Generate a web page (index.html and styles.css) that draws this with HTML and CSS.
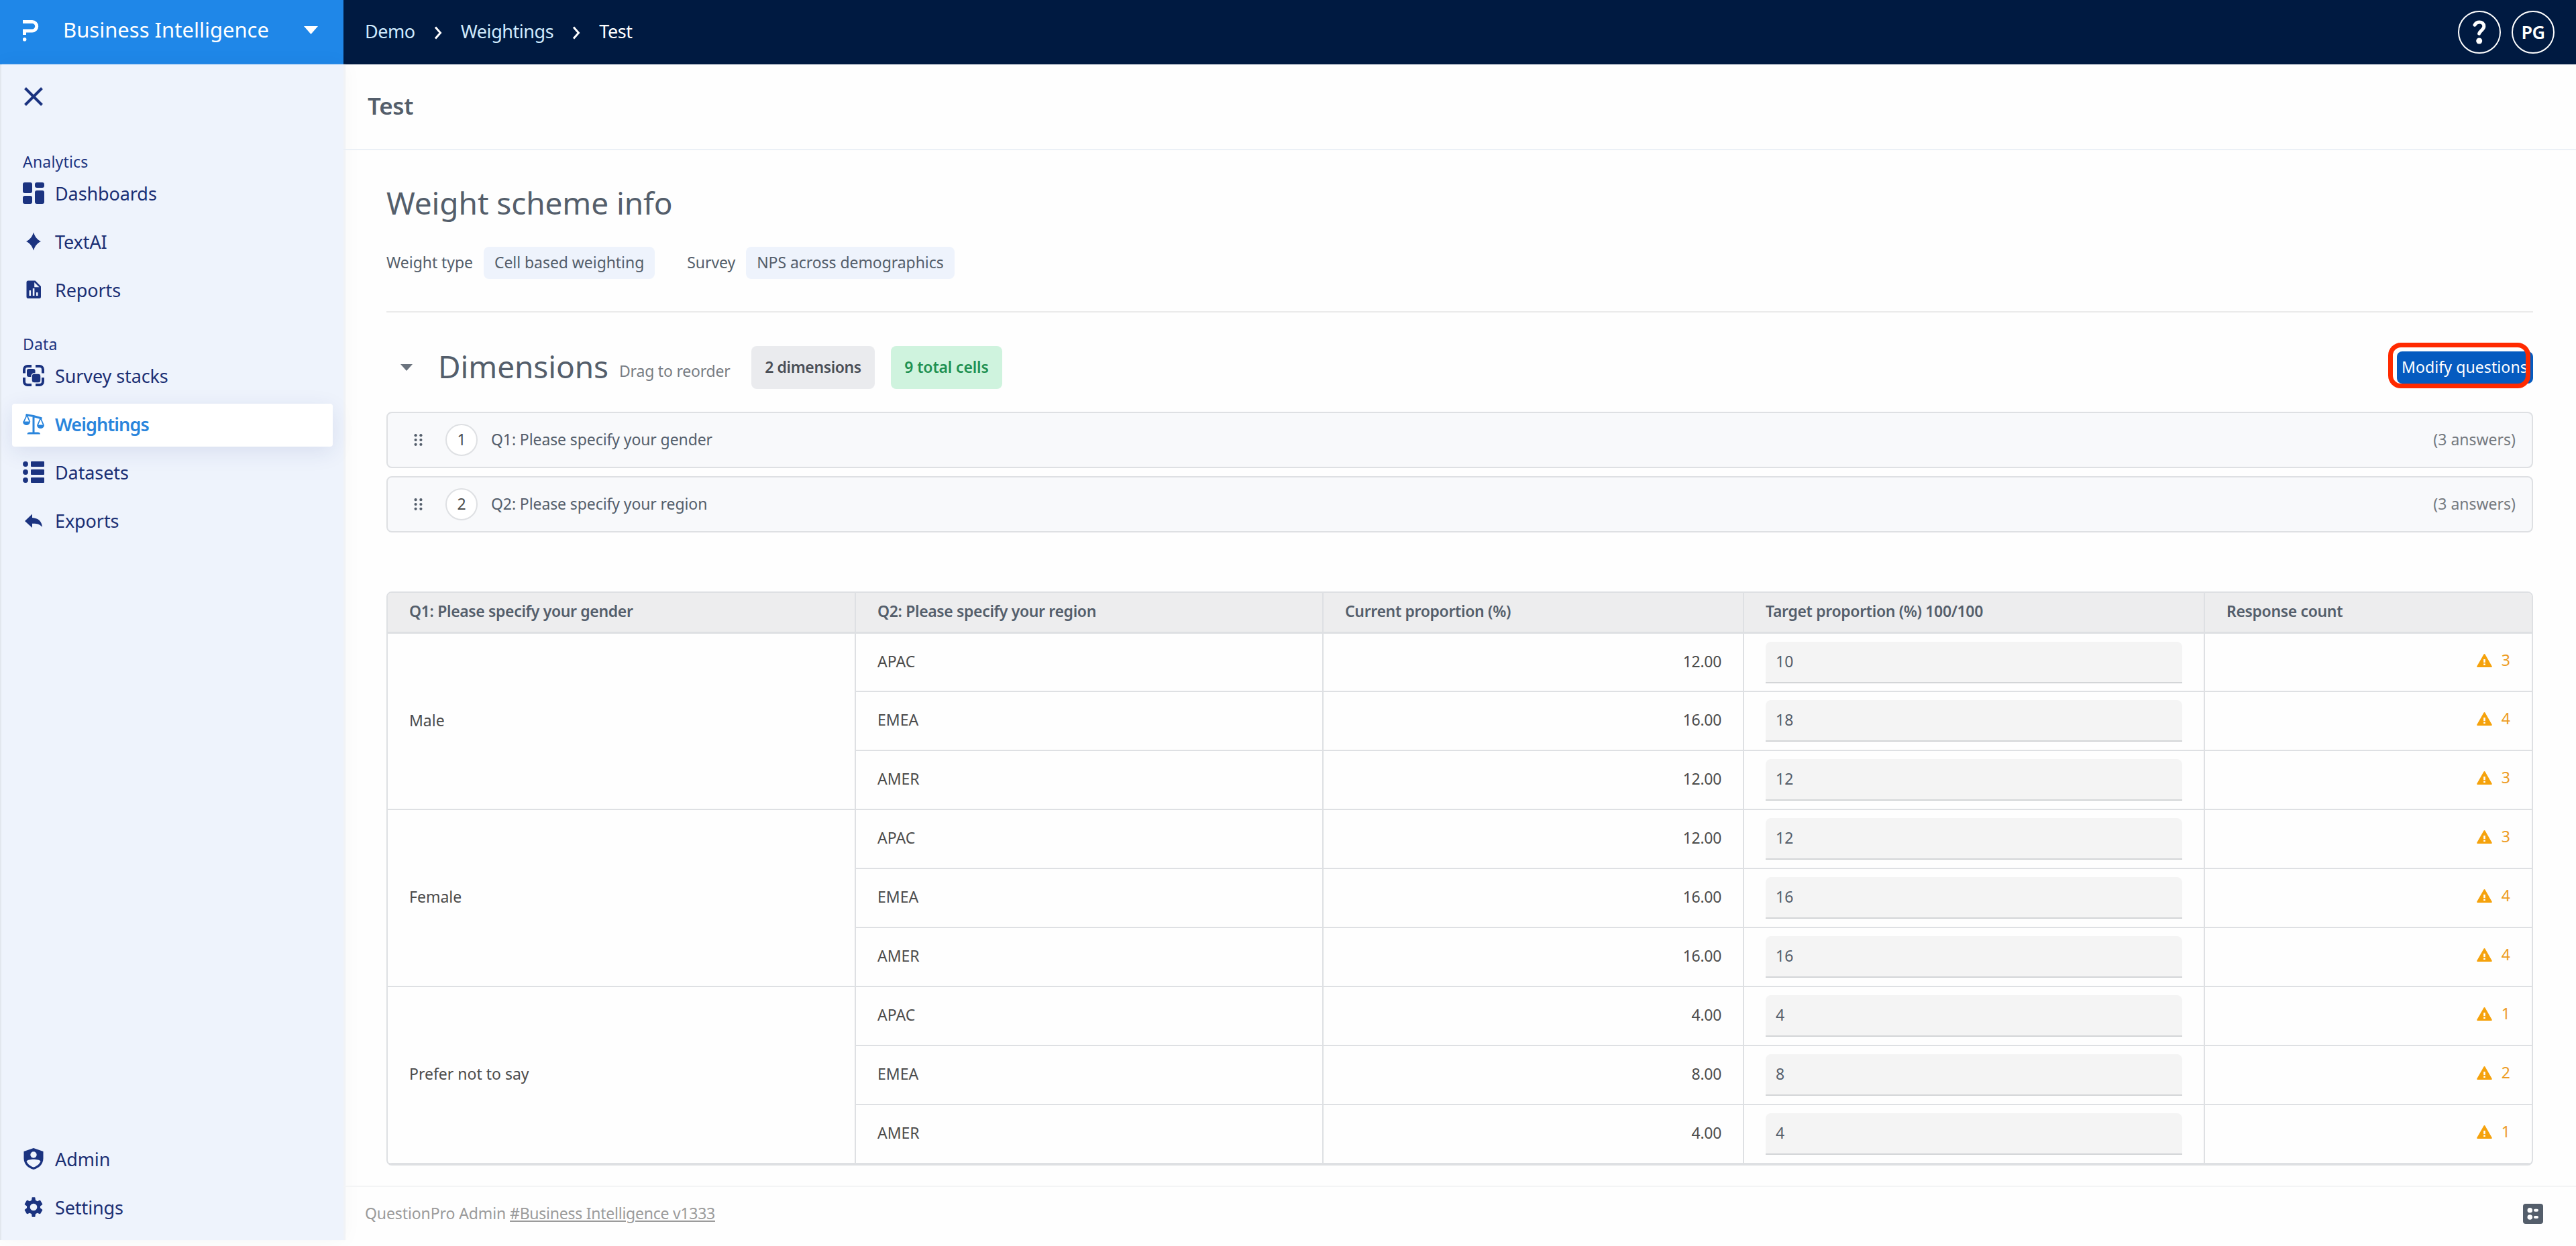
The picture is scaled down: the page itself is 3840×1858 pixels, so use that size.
FILE: index.html
```html
<!DOCTYPE html>
<html lang="en">
<head>
    <meta charset="UTF-8">
    <meta name="viewport" content="width=device-width, initial-scale=1.0">
    <title>Test - Weightings</title>
    <link rel="stylesheet" href="styles.css">
</head>
<body>

    <!-- Shared icons -->
    <svg class="sprite" width="0" height="0">
        <symbol id="warning" viewBox="0 0 23 20">
            <path d="M10.6 .6a1 1 0 0 1 1.8 0l10.3 17.9a1 1 0 0 1-.9 1.5H1.2a1 1 0 0 1-.9-1.5z" fill="#f5a20c"/>
            <path d="M10.2 8h2.6v5h-2.6zM10.2 14.6h2.6v2.4h-2.6z" fill="#fff"/>
        </symbol>
        <symbol id="drag" viewBox="0 0 13 18">
            <g fill="#545e6b">
                <circle cx="2.6" cy="2.2" r="2.1"/><circle cx="10.4" cy="2.2" r="2.1"/>
                <circle cx="2.6" cy="9" r="2.1"/><circle cx="10.4" cy="9" r="2.1"/>
                <circle cx="2.6" cy="15.8" r="2.1"/><circle cx="10.4" cy="15.8" r="2.1"/>
            </g>
        </symbol>
        <symbol id="chevron" viewBox="0 0 12 20">
            <path d="M2 1.5L9.5 10L2 18.5" fill="none" stroke="#fff" stroke-width="3"/>
        </symbol>
    </svg>

    <header class="topbar">
        <div class="product">
            <svg class="logo" width="24" height="32" viewBox="0 0 24 32">
                <path d="M0 2.5H14a6.7 6.7 0 0 1 0 13.4H2.5V22" fill="none" stroke="#fff" stroke-width="5"/>
                <circle cx="2.6" cy="28.8" r="2.8" fill="#fff"/>
            </svg>
            <span class="product-name">Business Intelligence</span>
            <svg class="caret" width="21" height="12" viewBox="0 0 21 12"><path d="M0 0H21L10.5 12z" fill="#fff"/></svg>
        </div>
        <nav class="breadcrumb">
            <a>Demo</a>
            <svg width="12" height="20"><use href="#chevron"/></svg>
            <a>Weightings</a>
            <svg width="12" height="20"><use href="#chevron"/></svg>
            <span>Test</span>
        </nav>
        <div class="user">
            <div class="round">
                <svg width="20" height="36" viewBox="0 0 20 36">
                    <path d="M3 7.2C4.500 4.500 7 3 10 3c4 0 6.800 2.400 6.800 6.200 0 5-5.800 6-7.200 11" fill="none" stroke="#fff" stroke-width="5" stroke-linecap="round"/>
                    <circle cx="9.700" cy="31" r="4.500" fill="#fff"/>
                </svg>
            </div>
            <div class="round initials">PG</div>
        </div>
    </header>

    <div class="page">
        <aside class="sidebar">
            <div class="close">
                <svg width="28" height="28" viewBox="0 0 28 28"><path d="M1.500 1.500L26.500 26.500M26.500 1.500L1.500 26.500" stroke="#1b3380" stroke-width="4"/></svg>
            </div>

            <div class="group">
                <div class="label">Analytics</div>
                <a class="item">
                    <svg width="32" height="32" viewBox="0 0 32 32" fill="#1b3380">
                        <rect x="0" y="0" width="14" height="16" rx="3"/><rect x="18" y="0" width="14" height="8" rx="3"/>
                        <rect x="0" y="20" width="14" height="12" rx="3"/><rect x="18" y="12" width="14" height="20" rx="3"/>
                    </svg>
                    Dashboards
                </a>
                <a class="item">
                    <svg width="32" height="32" viewBox="0 0 32 32" fill="#1b3380"><path d="M16 2.500C18 9 21.500 13.500 27 16C21.500 18.500 18 23 16 29.500C14 23 10.500 18.500 5 16C10.500 13.500 14 9 16 2.500z"/></svg>
                    TextAI
                </a>
                <a class="item">
                    <svg width="32" height="32" viewBox="0 0 32 32" fill="#1b3380">
                        <path d="M8 2.500H18.500L27 11V26.500a2.500 2.500 0 0 1-2.500 2.500H8a2.500 2.500 0 0 1-2.500-2.500V5a2.500 2.500 0 0 1 2.500-2.500z"/>
                        <path d="M17.200 5V12.200H24.600zM9.500 17h2.600v8h-2.600zM14.800 14h2.600v11h-2.600zM20 20h2.600v5h-2.600z" fill="#eef3fc"/>
                    </svg>
                    Reports
                </a>
            </div>

            <div class="group">
                <div class="label">Data</div>
                <a class="item">
                    <svg width="32" height="32" viewBox="0 0 32 32">
                        <path d="M2 12.500V7a5 5 0 0 1 5-5H13M19 2h6a5 5 0 0 1 5 5v5.500M30 19v6a5 5 0 0 1-5 5H19M13 30H7a5 5 0 0 1-5-5V19" fill="none" stroke="#1b3380" stroke-width="4"/>
                        <rect x="6" y="6" width="12.500" height="12" rx="3" fill="#1b3380"/>
                        <rect x="13" y="13" width="14" height="14" rx="4" fill="#1b3380" stroke="#eef3fc" stroke-width="1.500"/>
                    </svg>
                    Survey stacks
                </a>
                <a class="item active">
                    <svg width="32" height="32" viewBox="0 0 32 32">
                        <path d="M4.500 2.500L16 4.500L28.500 8M16 4V29" fill="none" stroke="#2a85dc" stroke-width="3"/>
                        <path d="M6 3L1.500 13M6 3L10.500 13M26.500 7.500L22 18M26.500 7.500L31 18" fill="none" stroke="#2a85dc" stroke-width="1.800"/>
                        <path d="M0 12.500H11a5.500 5.500 0 0 1-11 0zM21 17.500H32a5.500 5.500 0 0 1-11 0zM6.500 31.500c0-2 1.500-3 3.500-3H22.500c2 0 3.500 1 3.500 3z" fill="#2a85dc"/>
                    </svg>
                    Weightings
                </a>
                <a class="item">
                    <svg width="32" height="32" viewBox="0 0 32 32" fill="#1b3380">
                        <circle cx="4" cy="4" r="3.900"/><circle cx="4" cy="16" r="3.900"/><circle cx="4" cy="28" r="3.900"/>
                        <rect x="12" y="0" width="20" height="8" rx="1"/><rect x="12" y="12" width="20" height="8" rx="1"/><rect x="12" y="24" width="20" height="8" rx="1"/>
                    </svg>
                    Datasets
                </a>
                <a class="item">
                    <svg width="32" height="32" viewBox="0 0 32 32" fill="#1b3380"><path d="M3 17L14 6.500V12C23 12.500 28 17 29 26C25 21.500 20.500 20.500 14 20.800V27z"/></svg>
                    Exports
                </a>
            </div>

            <div class="group bottom">
                <a class="item">
                    <svg width="32" height="32" viewBox="0 0 32 32">
                        <path d="M16 0L30.500 5V15C30.500 24 24.500 29.500 16 32C7.500 29.500 1.500 24 1.500 15V5z" fill="#1b3380"/>
                        <circle cx="16" cy="10" r="4.700" fill="#eef3fc"/>
                        <path d="M5.500 19.500C8.500 15.800 23.500 15.800 26.500 19.500C24.500 24.500 20.500 27 16 28.500C11.500 27 7.500 24.500 5.500 19.500z" fill="#eef3fc"/>
                    </svg>
                    Admin
                </a>
                <a class="item">
                    <svg width="32" height="32" viewBox="0 0 24 24" fill="#1b3380"><path d="M19.400 13c.1-.3.100-.6.100-1s0-.7-.1-1l2.400-1.900a.6.6 0 0 0 .1-.7L19.700 4.600a.6.6 0 0 0-.7-.3l-2.800 1.200c-.6-.5-1.300-.8-2-1.100L13.800 1.400a.6.6 0 0 0-.6-.5H10.800a.6.6 0 0 0-.6.500L9.800 4.400c-.7.3-1.400.7-2 1.100L5 4.300a.6.6 0 0 0-.7.3L2.100 8.400a.6.6 0 0 0 .1.700L4.600 11c0 .3-.1.700-.1 1s0 .7.1 1L2.200 14.900a.6.6 0 0 0-.1.700l2.200 3.800c.1.300.4.400.7.300l2.800-1.200c.6.500 1.300.8 2 1.100l.4 3c0 .3.300.5.600.5h2.400c.3 0 .6-.2.600-.5l.4-3c.7-.3 1.400-.7 2-1.100l2.800 1.200c.3.100.6 0 .7-.3l2.200-3.800a.6.6 0 0 0-.1-.7zM12 16a4 4 0 1 1 0-8 4 4 0 0 1 0 8z"/></svg>
                    Settings
                </a>
            </div>
        </aside>

        <main class="main">
            <div class="title-bar">Test</div>

            <div class="content">
                <h1>Weight scheme info</h1>
                <div class="meta">
                    <span class="meta-label">Weight type</span>
                    <span class="chip">Cell based weighting</span>
                    <span class="meta-label second">Survey</span>
                    <span class="chip">NPS across demographics</span>
                </div>

                <div class="dimensions">
                    <svg class="toggle" width="18" height="10" viewBox="0 0 18 10"><path d="M0 0H18L9 10z" fill="#6b737e"/></svg>
                    <h2>Dimensions</h2>
                    <span class="hint">Drag to reorder</span>
                    <span class="badge grey">2 dimensions</span>
                    <span class="badge green">9 total cells</span>
                    <div class="modify">
                        <button>Modify questions</button>
                        <div class="highlight"></div>
                    </div>
                </div>

                <div class="question">
                    <svg width="13" height="18"><use href="#drag"/></svg>
                    <span class="number">1</span>
                    <span>Q1: Please specify your gender</span>
                    <span class="answers">(3 answers)</span>
                </div>
                <div class="question">
                    <svg width="13" height="18"><use href="#drag"/></svg>
                    <span class="number">2</span>
                    <span>Q2: Please specify your region</span>
                    <span class="answers">(3 answers)</span>
                </div>

                <div class="table-box">
                    <table>
                        <colgroup>
                            <col class="c1"><col class="c2"><col class="c3"><col class="c4"><col class="c5">
                        </colgroup>
                        <tr>
                            <th>Q1: Please specify your gender</th>
                            <th>Q2: Please specify your region</th>
                            <th>Current proportion (%)</th>
                            <th>Target proportion (%) 100/100</th>
                            <th>Response count</th>
                        </tr>
                        <tr class="first">
                            <td rowspan="3">Male</td>
                            <td>APAC</td>
                            <td class="num">12.00</td>
                            <td class="target"><input type="text" value="10"></td>
                            <td class="count"><svg width="23" height="20"><use href="#warning"/></svg>3</td>
                        </tr>
                        <tr>
                            <td>EMEA</td>
                            <td class="num">16.00</td>
                            <td class="target"><input type="text" value="18"></td>
                            <td class="count"><svg width="23" height="20"><use href="#warning"/></svg>4</td>
                        </tr>
                        <tr>
                            <td>AMER</td>
                            <td class="num">12.00</td>
                            <td class="target"><input type="text" value="12"></td>
                            <td class="count"><svg width="23" height="20"><use href="#warning"/></svg>3</td>
                        </tr>
                        <tr>
                            <td rowspan="3">Female</td>
                            <td>APAC</td>
                            <td class="num">12.00</td>
                            <td class="target"><input type="text" value="12"></td>
                            <td class="count"><svg width="23" height="20"><use href="#warning"/></svg>3</td>
                        </tr>
                        <tr>
                            <td>EMEA</td>
                            <td class="num">16.00</td>
                            <td class="target"><input type="text" value="16"></td>
                            <td class="count"><svg width="23" height="20"><use href="#warning"/></svg>4</td>
                        </tr>
                        <tr>
                            <td>AMER</td>
                            <td class="num">16.00</td>
                            <td class="target"><input type="text" value="16"></td>
                            <td class="count"><svg width="23" height="20"><use href="#warning"/></svg>4</td>
                        </tr>
                        <tr>
                            <td rowspan="3">Prefer not to say</td>
                            <td>APAC</td>
                            <td class="num">4.00</td>
                            <td class="target"><input type="text" value="4"></td>
                            <td class="count"><svg width="23" height="20"><use href="#warning"/></svg>1</td>
                        </tr>
                        <tr>
                            <td>EMEA</td>
                            <td class="num">8.00</td>
                            <td class="target"><input type="text" value="8"></td>
                            <td class="count"><svg width="23" height="20"><use href="#warning"/></svg>2</td>
                        </tr>
                        <tr>
                            <td>AMER</td>
                            <td class="num">4.00</td>
                            <td class="target"><input type="text" value="4"></td>
                            <td class="count"><svg width="23" height="20"><use href="#warning"/></svg>1</td>
                        </tr>
                    </table>
                </div>
            </div>

            <footer class="footer">
                <div>QuestionPro Admin <a>#Business Intelligence v1333</a></div>
                <svg width="30" height="30" viewBox="0 0 30 30">
                    <rect width="30" height="30" rx="4" fill="#545e6b"/>
                    <g fill="#fff">
                        <circle cx="10.300" cy="9.700" r="3.800"/><circle cx="10.300" cy="20" r="3.800"/>
                        <rect x="16" y="7.700" width="7" height="4" rx="2"/><rect x="16" y="18" width="7" height="4" rx="2"/>
                    </g>
                </svg>
            </footer>
        </main>
    </div>

</body>
</html>
```
FILE: styles.css
```css
* {
    box-sizing: border-box;
}
body {
    margin: 0;
    height: 1858px;
    overflow: hidden;
    font-family: "Noto Sans", "Open Sans", sans-serif;
    font-size: 23px;
    color: #545e6b;
    background: #fefefe;
}
svg {
    display: block;
    flex: none;
}
.sprite {
    position: absolute;
}

/* Top bar */
.topbar {
    display: flex;
    height: 96px;
    background: #001a41;
}
.product {
    display: flex;
    align-items: center;
    width: 512px;
    padding: 0 38px 8px 34px;
    background: #1f87e8;
    color: #fff;
    font-size: 31px;
}
.logo {
    margin-top: 4px;
}
.product-name {
    margin-left: 36px;
}
.caret {
    margin-left: auto;
    margin-top: 2px;
}
.breadcrumb {
    display: flex;
    align-items: center;
    padding: 0 0 3px 32px;
    font-size: 27px;
    letter-spacing: -0.45px;
    color: #fff;
}
.breadcrumb a {
    color: #cfeafd;
}
.breadcrumb svg {
    margin: 5px 28px 0;
}
.user {
    display: flex;
    align-items: center;
    gap: 16px;
    margin-left: auto;
    padding-right: 32px;
}
.round {
    display: flex;
    align-items: center;
    justify-content: center;
    width: 64px;
    height: 64px;
    border: 2px solid #fff;
    border-radius: 50%;
    color: #fff;
}
.initials {
    padding-bottom: 2px;
    font-size: 27px;
    font-weight: 600;
    letter-spacing: -0.5px;
}

/* Sidebar */
.page {
    display: flex;
    height: 1762px;
}
.sidebar {
    display: flex;
    flex-direction: column;
    width: 512px;
    height: 1753px;
    padding-bottom: 15px;
    border-left: 2px solid #e2e7ee;
    background: #eef3fc;
    box-shadow: 3px 0 1px #f1f3f6, 0 0 30px rgba(0, 0, 0, 0.04);
}
.close {
    height: 130px;
    padding: 34px 0 0 34px;
}
.group {
    padding: 0 16px;
    margin-bottom: 32px;
}
.bottom {
    margin-top: auto;
    margin-bottom: 0;
}
.label {
    height: 32px;
    padding-left: 16px;
    line-height: 30px;
    letter-spacing: 0.2px;
    color: #1b3380;
}
.item {
    display: flex;
    align-items: center;
    gap: 16px;
    height: 64px;
    padding: 0 16px 3px;
    margin-bottom: 8px;
    border-radius: 4px;
    font-size: 27px;
    letter-spacing: -0.1px;
    color: #1b2f74;
}
.item:last-child {
    margin-bottom: 0;
}
.item svg {
    margin-top: -1px;
}
.active {
    background: #fff;
    color: #2a85dc;
    font-weight: 600;
    letter-spacing: -0.9px;
    box-shadow: 0 8px 32px rgba(27, 51, 128, 0.1);
}

/* Main area */
.main {
    position: relative;
    display: flex;
    flex-direction: column;
    flex: 1;
}
.title-bar {
    display: flex;
    align-items: center;
    height: 128px;
    padding: 0 0 3px 36px;
    border-bottom: 2px solid #ebf0f6;
    font-size: 35px;
    font-weight: 600;
    letter-spacing: -0.3px;
}
.content {
    flex: 1;
    padding: 48px 64px 0;
}
h1, h2 {
    margin: 0;
    font-size: 46px;
    font-weight: 400;
    line-height: 60px;
    letter-spacing: -0.1px;
}
.meta {
    display: flex;
    align-items: center;
    gap: 16px;
    height: 134px;
    padding: 36px 0 48px;
    border-bottom: 2px solid #ebebeb;
    letter-spacing: -0.06px;
}
.meta-label {
    padding-bottom: 2px;
}
.second {
    margin-left: 32px;
}
.chip {
    height: 48px;
    padding: 0 16px;
    border-radius: 8px;
    background: #eef3fc;
    line-height: 46px;
}
.dimensions {
    display: flex;
    align-items: center;
    height: 64px;
    margin: 50px 0 34px;
}
.toggle {
    margin-left: 21px;
}
h2 {
    width: 270px;
    margin: -4px 0 0 38px;
}
.hint {
    width: 197px;
    margin-top: 10px;
    letter-spacing: -0.2px;
    color: #787d84;
}
.badge {
    height: 64px;
    border-radius: 8px;
    font-weight: 600;
    line-height: 62px;
    text-align: center;
}
.grey {
    width: 184px;
    background: #eaebee;
    color: #4a4f57;
    letter-spacing: -0.4px;
}
.green {
    width: 166px;
    margin-left: 24px;
    background: #cff3de;
    color: #1f9152;
    letter-spacing: -0.15px;
}
.modify {
    position: relative;
    margin-left: auto;
}
.modify button {
    display: block;
    width: 203px;
    height: 48px;
    padding: 0 0 2px 7px;
    border: none;
    border-radius: 8px;
    background: #055bc0;
    color: #fff;
    font-family: inherit;
    font-size: 23px;
    letter-spacing: 0.1px;
    text-align: left;
    white-space: nowrap;
}
/* Red frame drawn round the button */
.highlight {
    position: absolute;
    left: -13px;
    top: -13px;
    width: 212px;
    height: 68px;
    border: 7px solid #ff2a00;
    border-radius: 19px;
}

.question {
    display: flex;
    align-items: center;
    height: 84px;
    margin-bottom: 12px;
    padding: 0 24px 2px 39px;
    border: 2px solid #dee0e3;
    border-radius: 8px;
    background: #f8f9fb;
    letter-spacing: -0.1px;
}
.question svg {
    margin-top: 2px;
}
.number {
    width: 48px;
    height: 48px;
    margin: 2px 20px 0 34px;
    border: 2px solid #dee0e3;
    border-radius: 50%;
    background: #fff;
    line-height: 42px;
    text-align: center;
    color: #4b4b4b;
}
.answers {
    margin-left: auto;
    letter-spacing: 0;
    color: #757a80;
}

/* Weights table */
.table-box {
    margin-top: 88px;
    border: 2px solid #dee0e3;
    border-radius: 8px;
    overflow: hidden;
}
table {
    width: 3196px;
    table-layout: fixed;
    border-collapse: separate;
    border-spacing: 0;
}
.c1 {
    width: 698px;
}
.c2 {
    width: 697px;
}
.c3 {
    width: 627px;
}
.c4 {
    width: 687px;
}
.c5 {
    width: 487px;
}
th, td {
    border-right: 2px solid #dee0e3;
    border-bottom: 2px solid #dee0e3;
    text-align: left;
    vertical-align: middle;
    line-height: 30px;
}
th {
    height: 61px;
    padding: 0 32px 4px;
    border-bottom-width: 3px;
    background: #ededee;
    font-weight: 600;
    letter-spacing: -0.35px;
}
td {
    height: 88px;
    padding: 0 32px 4px;
    color: #4b4b4b;
}
.first td {
    height: 87px;
}
th:last-child, .count {
    border-right: none;
}
.num {
    text-align: right;
    letter-spacing: -0.3px;
}
.target {
    padding-right: 0;
    padding-bottom: 0;
}
.target input {
    display: block;
    width: 621px;
    height: 62px;
    padding: 0 15px 2px;
    border: none;
    border-bottom: 2px solid #d3d5d7;
    border-radius: 8px 8px 0 0;
    background: #f4f4f4;
    color: #545e6b;
    font-family: inherit;
    font-size: 23px;
}
.count {
    padding-bottom: 8px;
    text-align: right;
    color: #ed9c22;
}
.count svg {
    display: inline-block;
    margin-right: 14px;
    vertical-align: -2px;
}

.footer {
    display: flex;
    align-items: center;
    justify-content: space-between;
    height: 90px;
    padding: 0 49px 8px 32px;
    border-top: 2px solid #f3f4f5;
    color: #9b9b9b;
    letter-spacing: -0.1px;
}
.footer div {
    padding-bottom: 2px;
}
.footer a {
    text-decoration: underline;
    letter-spacing: -0.25px;
}
```
